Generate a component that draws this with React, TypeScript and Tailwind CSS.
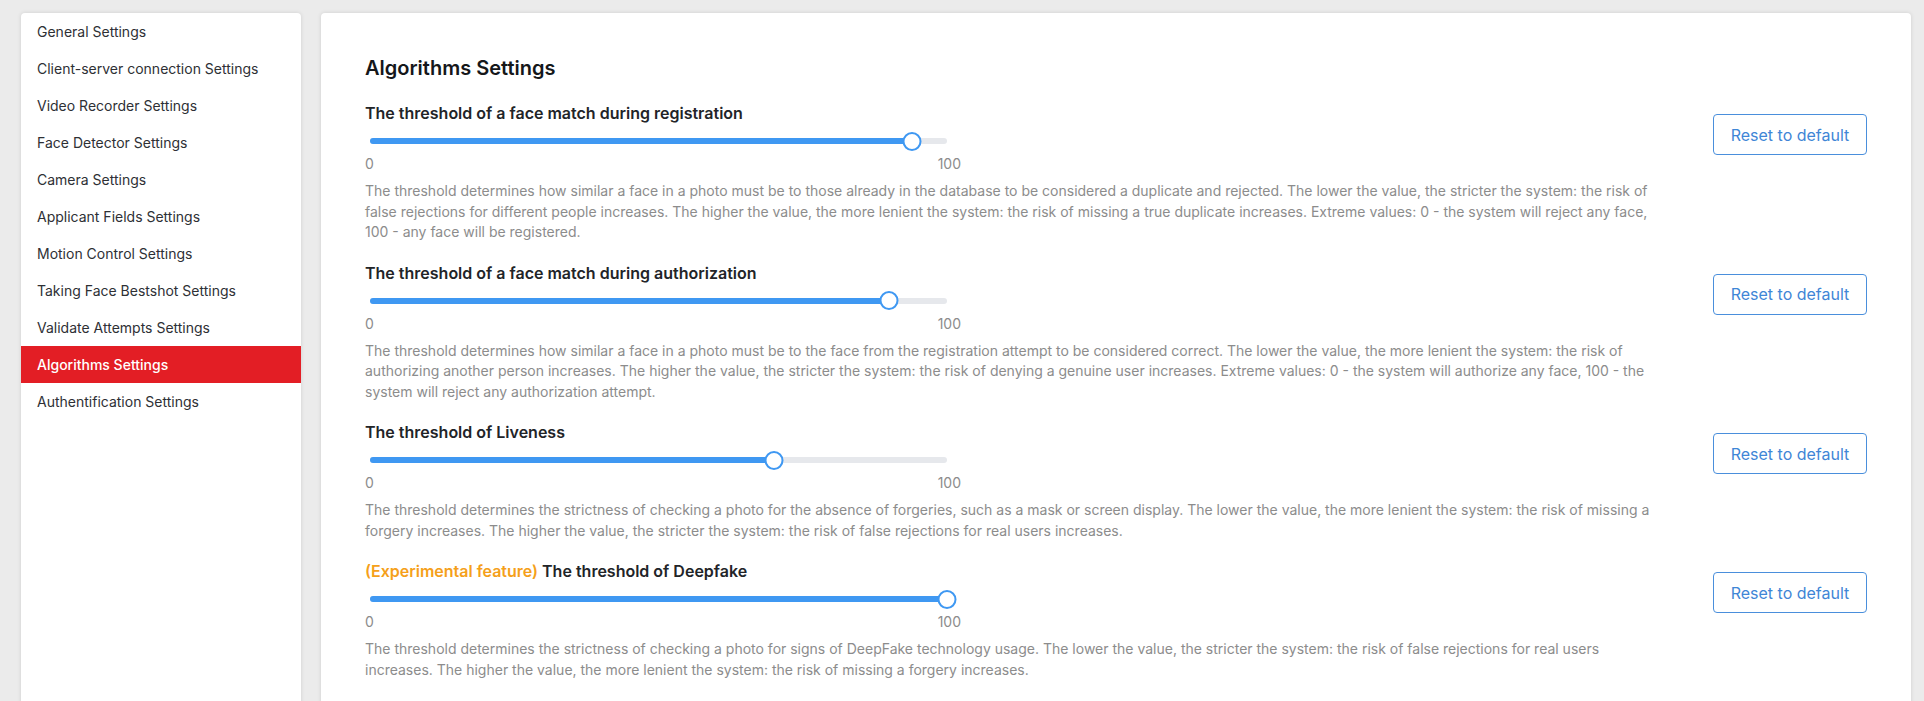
import React from "react";

const menu = [
  "General Settings",
  "Client-server connection Settings",
  "Video Recorder Settings",
  "Face Detector Settings",
  "Camera Settings",
  "Applicant Fields Settings",
  "Motion Control Settings",
  "Taking Face Bestshot Settings",
  "Validate Attempts Settings",
  "Algorithms Settings",
  "Authentification Settings",
];

type Setting = {
  experimental?: boolean;
  title: string;
  value: number;
  text: string;
};

const settings: Setting[] = [
  {
    title: "The threshold of a face match during registration",
    value: 94,
    text: "The threshold determines how similar a face in a photo must be to those already in the database to be considered a duplicate and rejected. The lower the value, the stricter the system: the risk of false rejections for different people increases. The higher the value, the more lenient the system: the risk of missing a true duplicate increases. Extreme values: 0 - the system will reject any face, 100 - any face will be registered.",
  },
  {
    title: "The threshold of a face match during authorization",
    value: 90,
    text: "The threshold determines how similar a face in a photo must be to the face from the registration attempt to be considered correct. The lower the value, the more lenient the system: the risk of authorizing another person increases. The higher the value, the stricter the system: the risk of denying a genuine user increases. Extreme values: 0 - the system will authorize any face, 100 - the system will reject any authorization attempt.",
  },
  {
    title: "The threshold of Liveness",
    value: 70,
    text: "The threshold determines the strictness of checking a photo for the absence of forgeries, such as a mask or screen display. The lower the value, the more lenient the system: the risk of missing a forgery increases. The higher the value, the stricter the system: the risk of false rejections for real users increases.",
  },
  {
    experimental: true,
    title: "The threshold of Deepfake",
    value: 100,
    text: "The threshold determines the strictness of checking a photo for signs of DeepFake technology usage. The lower the value, the stricter the system: the risk of false rejections for real users increases. The higher the value, the more lenient the system: the risk of missing a forgery increases.",
  },
];

function Slider({ value }: { value: number }) {
  return (
    <div className="w-[596px]">
      <div className="relative ml-[5px] mr-[14px] flex h-[20px] items-center">
        <div className="h-[6px] w-full rounded-full bg-[#e6e8ec]" />
        <div
          className="absolute left-0 top-[7px] h-[6px] rounded-full bg-[#3f98f2]"
          style={{ width: `${value}%` }}
        />
        <div
          className="absolute top-[0.5px] h-[19px] w-[19px] -translate-x-1/2 rounded-full border-2 border-[#3f98f2] bg-white"
          style={{ left: `${value}%` }}
        />
      </div>
      <div className="mt-[4px] flex justify-between text-[14px] leading-[18px] text-[#8c8c8c]">
        <span>0</span>
        <span>100</span>
      </div>
    </div>
  );
}

function SettingRow({ s }: { s: Setting }) {
  return (
    <div>
      <div className="flex items-start justify-between">
        <div>
          <h3 className="text-[16px] font-semibold leading-[22px] text-[#222428]">
            {s.experimental && <span className="text-[#f5a01a]">(Experimental feature) </span>}
            {s.title}
          </h3>
          <div className="mt-[7px]">
            <Slider value={s.value} />
          </div>
        </div>
        <button className="mt-[12px] h-[41px] w-[154px] rounded-[4px] border border-[#4a8fdc] text-[16px] text-[#3f86d6]">
          Reset to default
        </button>
      </div>
      <p className="mt-[8px] max-w-[1300px] text-[14px] leading-[20.5px] text-[#8c8c8c]">{s.text}</p>
    </div>
  );
}

export default function App() {
  return (
    <div className="flex min-h-[760px] gap-5 bg-[#ebebeb] pl-[21px] pr-[13px] pt-[13px] font-['Inter',sans-serif]">
      <aside className="w-[280px] shrink-0 rounded-t-[4px] bg-white shadow-[0_0_4px_rgba(0,0,0,0.12)]">
        {menu.map((m) => (
          <div
            key={m}
            className={
              m === "Algorithms Settings"
                ? "flex h-[37px] items-center bg-[#e31e25] px-4 text-[14px] font-medium text-white"
                : "flex h-[37px] items-center px-4 text-[14px] text-[#2e3035]"
            }
          >
            {m}
          </div>
        ))}
      </aside>
      <main className="flex-1 rounded-t-[4px] bg-white px-11 pt-[41px] pb-10 shadow-[0_0_4px_rgba(0,0,0,0.12)]">
        <h2 className="text-[20px] font-semibold leading-[28px] text-[#15171a]">Algorithms Settings</h2>
        <div className="mt-5 flex flex-col gap-[19px]">
          {settings.map((s) => (
            <SettingRow key={s.title} s={s} />
          ))}
        </div>
      </main>
    </div>
  );
}
